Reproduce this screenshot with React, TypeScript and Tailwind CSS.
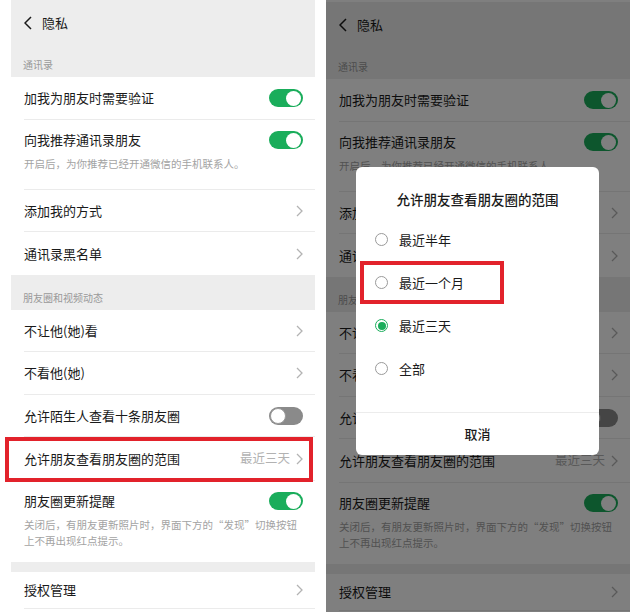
import React from "react";

const font = { fontFamily: '"Noto Sans CJK SC", "Noto Sans", sans-serif' };

const Chevron = () => (
  <svg width="7" height="12" viewBox="0 0 7 12" className="shrink-0">
    <polyline points="1,1 6,6 1,11" fill="none" stroke="#b3b3b3" strokeWidth="1.3" />
  </svg>
);

const Back = () => (
  <svg width="8" height="14" viewBox="0 0 8 14" className="shrink-0">
    <polyline points="7,1 1,7 7,13" fill="none" stroke="#1a1a1a" strokeWidth="1.5" />
  </svg>
);

const Toggle = ({ on }: { on?: boolean }) =>
  on ? (
    <div className="flex h-[18px] w-[34px] shrink-0 items-center justify-end rounded-full bg-[#1aad5b] pr-[2px]">
      <div className="size-[15px] rounded-full bg-white" />
    </div>
  ) : (
    <div className="flex h-[18px] w-[34px] shrink-0 items-center rounded-full bg-[#8a8a8a] pl-[1px]">
      <div className="size-[16px] rounded-full border border-[#9a9a9a] bg-white" />
    </div>
  );

type RowProps = {
  label: string;
  h: string;
  toggle?: "on" | "off";
  value?: string;
  last?: boolean;
};

const Row = ({ label, h, toggle, value, last }: RowProps) => (
  <div className="pl-[13px]">
    <div
      className={`flex items-center pr-[12px] ${h} ${last ? "" : "border-b border-[#ebebeb]"}`}
    >
      <span className="flex-1 text-[13px] text-[#1a1a1a]">{label}</span>
      {value && <span className="mr-[6px] text-[12.5px] text-[#b2b2b2]">{value}</span>}
      {toggle ? <Toggle on={toggle === "on"} /> : <Chevron />}
    </div>
  </div>
);

const SectionLabel = ({ text, h }: { text: string; h: string }) => (
  <div className={`flex items-end pl-[12px] pb-[6px] ${h}`}>
    <span className="text-[10px] leading-[12px] text-[#999]">{text}</span>
  </div>
);

function Phone() {
  return (
    <div className="h-[612px] w-[304px] shrink-0 overflow-hidden bg-[#ededed]">
      <div className="flex h-[46px] items-center gap-[10px] pl-[13px]">
        <Back />
        <span className="text-[13px] text-[#1a1a1a]">隐私</span>
      </div>
      <SectionLabel text="通讯录" h="h-[31px]" />
      <div className="bg-white">
        <Row label="加我为朋友时需要验证" h="h-[43px]" toggle="on" />
        <div className="pl-[13px]">
          <div className="h-[70px] border-b border-[#ebebeb] pr-[12px] pt-[11px]">
            <div className="flex h-[18px] items-center">
              <span className="flex-1 text-[13px] text-[#1a1a1a]">向我推荐通讯录朋友</span>
              <Toggle on />
            </div>
            <div className="mt-[8px] text-[10.5px] leading-[14px] text-[#a3a3a3]">
              开启后，为你推荐已经开通微信的手机联系人。
            </div>
          </div>
        </div>
        <Row label="添加我的方式" h="h-[42px]" />
        <Row label="通讯录黑名单" h="h-[43px]" last />
      </div>
      <SectionLabel text="朋友圈和视频动态" h="h-[35px]" />
      <div className="bg-white">
        <Row label="不让他(她)看" h="h-[42px]" />
        <Row label="不看他(她)" h="h-[43px]" />
        <Row label="允许陌生人查看十条朋友圈" h="h-[42px]" toggle="off" />
        <Row label="允许朋友查看朋友圈的范围" h="h-[44px]" value="最近三天" />
        <div className="pl-[13px]">
          <div className="h-[81px] pr-[12px] pt-[11px]">
            <div className="flex h-[18px] items-center">
              <span className="flex-1 text-[13px] text-[#1a1a1a]">朋友圈更新提醒</span>
              <Toggle on />
            </div>
            <div className="mt-[7px] text-[10.5px] leading-[16px] text-[#a3a3a3]">
              关闭后，有朋友更新照片时，界面下方的“发现”切换按钮
              <br />
              上不再出现红点提示。
            </div>
          </div>
        </div>
      </div>
      <div className="h-[10px]" />
      <div className="bg-white">
        <Row label="授权管理" h="h-[37px]" />
        <Row label="" h="h-[40px]" last />
      </div>
    </div>
  );
}

const Radio = ({ checked }: { checked?: boolean }) =>
  checked ? (
    <div className="flex size-[13px] shrink-0 items-center justify-center rounded-full border border-[#1aad5b]">
      <div className="size-[8px] rounded-full bg-[#1aad5b]" />
    </div>
  ) : (
    <div className="size-[13px] shrink-0 rounded-full border border-[#9a9a9a]" />
  );

function Dialog() {
  const opts = ["最近半年", "最近一个月", "最近三天", "全部"];
  return (
    <div className="absolute left-[30px] top-[167px] w-[243px] overflow-hidden rounded-[6px] bg-white">
      <div className="pt-[22px] text-center text-[13.5px] font-medium leading-[20px] text-[#1a1a1a]">
        允许朋友查看朋友圈的范围
      </div>
      <div className="mt-[9px] flex flex-col">
        {opts.map((o) => (
          <div key={o} className="flex h-[43px] items-center gap-[11px] pl-[19px]">
            <Radio checked={o === "最近三天"} />
            <span className="text-[13px] text-[#1a1a1a]">{o}</span>
          </div>
        ))}
      </div>
      <div className="mt-[22px] flex h-[43px] items-center justify-center border-t border-[#ececec] text-[13px] font-medium text-[#1a1a1a]">
        取消
      </div>
      <div className="absolute left-[4px] top-[94px] h-[43px] w-[144px] border-[4px] border-[#e2222b]" />
    </div>
  );
}

export default function App() {
  return (
    <div className="relative flex h-[612px] w-[632px] gap-[11px] overflow-hidden bg-white pl-[11px]" style={font}>
      <Phone />
      <div className="relative h-[612px] shrink-0 overflow-hidden pt-[2px]">
        <Phone />
        <div className="absolute inset-0 bg-black/50" />
        <Dialog />
      </div>
      <div className="absolute left-[5px] top-[437px] h-[45px] w-[308px] border-[4px] border-[#e2222b]" />
    </div>
  );
}
